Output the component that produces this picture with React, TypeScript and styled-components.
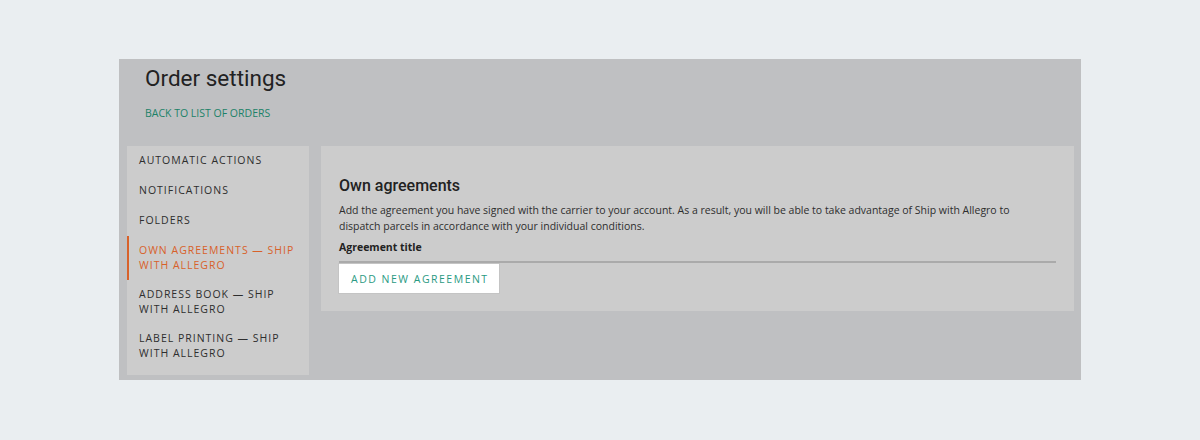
import React from 'react'
import styled, { createGlobalStyle } from 'styled-components'

const GlobalStyle = createGlobalStyle`
  html, body {
    margin: 0;
    padding: 0;
    background: #eaeef1;
    font-family: 'Open Sans', 'Liberation Sans', sans-serif;
  }
`

const Page = styled.div`
  width: 1200px;
  height: 440px;
  padding-top: 59px;
  box-sizing: border-box;
`

const Panel = styled.div`
  width: 962px;
  margin: 0 auto;
  background: #bfc0c2;
  padding: 0 7px 5px 8px;
  box-sizing: border-box;
`

const Header = styled.header`
  display: flex;
  flex-direction: column;
  align-items: flex-start;
  padding: 4px 0 25px 18px;
`

const Title = styled.h1`
  margin: 0;
  font-family: Roboto, 'Liberation Sans', sans-serif;
  font-weight: 400;
  font-size: 22.5px;
  line-height: 30px;
  color: #222;
`

const BackLink = styled.a`
  margin-top: 12px;
  font-size: 10.5px;
  line-height: 16px;
  color: #1b8268;
  text-transform: uppercase;
  text-decoration: none;
  cursor: pointer;
`

const Body = styled.div`
  display: flex;
  align-items: flex-start;
  gap: 12px;
`

const Sidebar = styled.nav`
  width: 182px;
  flex-shrink: 0;
  background: #cccccc;
  padding-bottom: 7px;
`

const NavItem = styled.div<{ $active?: boolean }>`
  box-sizing: border-box;
  min-height: 30px;
  padding: 7px 10px 7px 12px;
  font-size: 10.5px;
  line-height: 15px;
  letter-spacing: 1px;
  text-transform: uppercase;
  color: ${(p) => (p.$active ? '#d8612a' : '#2e2e2e')};
  box-shadow: ${(p) => (p.$active ? 'inset 2px 0 0 #d8612a' : 'none')};
  cursor: pointer;
`

const Card = styled.section`
  flex: 1;
  background: #cccccc;
  padding: 29px 18px 18px 18px;
`

const CardTitle = styled.h2`
  margin: 0 0 5px;
  font-family: Roboto, 'Liberation Sans', sans-serif;
  font-size: 16px;
  font-weight: 500;
  line-height: 22px;
  color: #222;
`

const Description = styled.p`
  margin: 0;
  max-width: 700px;
  font-size: 10.5px;
  line-height: 16px;
  color: #2e2e2e;
`

const FieldLabel = styled.div`
  margin-top: 5px;
  padding-bottom: 6px;
  font-size: 10.5px;
  font-weight: 700;
  line-height: 16px;
  color: #222;
  border-bottom: 2px solid #aaaaaa;
`

const AddButton = styled.button`
  display: block;
  margin-top: 1px;
  height: 29px;
  padding: 0 10px 0 12px;
  background: #fff;
  border: none;
  box-shadow: 0 0 0 1px #c4c4c4;
  font-family: 'Open Sans', 'Liberation Sans', sans-serif;
  font-size: 10.5px;
  letter-spacing: 1.5px;
  text-transform: uppercase;
  color: #2a9a82;
  cursor: pointer;
`

const navItems = [
  'Automatic actions',
  'Notifications',
  'Folders',
  'Own agreements — Ship with Allegro',
  'Address book — Ship with Allegro',
  'Label printing — Ship with Allegro',
]

export default function App(): JSX.Element {
  return (
    <Page>
      <GlobalStyle />
      <Panel>
        <Header>
          <Title>Order settings</Title>
          <BackLink>Back to list of orders</BackLink>
        </Header>
        <Body>
          <Sidebar>
            {navItems.map((item, i) => (
              <NavItem key={item} $active={i === 3}>
                {item}
              </NavItem>
            ))}
          </Sidebar>
          <Card>
            <CardTitle>Own agreements</CardTitle>
            <Description>
              Add the agreement you have signed with the carrier to your
              account. As a result, you will be able to take advantage of Ship
              with Allegro to dispatch parcels in accordance with your
              individual conditions.
            </Description>
            <FieldLabel>Agreement title</FieldLabel>
            <AddButton type="button">Add new agreement</AddButton>
          </Card>
        </Body>
      </Panel>
    </Page>
  )
}
